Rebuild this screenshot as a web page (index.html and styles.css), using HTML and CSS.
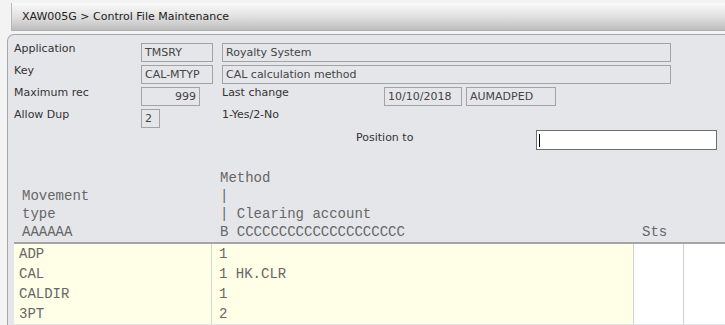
FILE: index.html
```
<html>

<head>
    <meta charset="utf-8">
    <title>XAW005G - Control File Maintenance</title>
    <link rel="stylesheet" href="styles.css">
</head>

<body>
    <div class="titlebar">XAW005G &gt; Control File Maintenance</div>
    <div class="panel">
        <div class="form">
            <div class="row">
                <span class="label">Application</span>
                <span class="box w-code">TMSRY</span>
                <span class="box w-desc">Royalty System</span>
            </div>
            <div class="row">
                <span class="label">Key</span>
                <span class="box w-code">CAL-MTYP</span>
                <span class="box w-desc">CAL calculation method</span>
            </div>
            <div class="row">
                <span class="label">Maximum rec</span>
                <span class="box w-num">999</span>
                <span class="label w-last">Last change</span>
                <span class="box w-date">10/10/2018</span>
                <span class="box w-user">AUMADPED</span>
            </div>
            <div class="row">
                <span class="label">Allow Dup</span>
                <span class="box w-dup">2</span>
                <span class="hint">1-Yes/2-No</span>
            </div>
            <div class="row pos-row">
                <span class="label w-pos">Position to</span>
                <span class="pos-input"><span class="caret"></span></span>
            </div>
        </div>

        <div class="grid head">
            <pre class="col1">

Movement
type
AAAAAA</pre>
            <pre class="col2">Method
|
| Clearing account
B CCCCCCCCCCCCCCCCCCCC</pre>
            <pre class="col3">



Sts</pre>
            <div></div>
        </div>

        <div class="grid rows">
            <div class="cell c1">ADP</div>
            <div class="cell c2">1</div>
            <div class="cell c3"></div>
            <div class="cell c4"></div>

            <div class="cell c1">CAL</div>
            <div class="cell c2">1 HK.CLR</div>
            <div class="cell c3"></div>
            <div class="cell c4"></div>

            <div class="cell c1">CALDIR</div>
            <div class="cell c2">1</div>
            <div class="cell c3"></div>
            <div class="cell c4"></div>

            <div class="cell c1">3PT</div>
            <div class="cell c2">2</div>
            <div class="cell c3"></div>
            <div class="cell c4"></div>
        </div>
    </div>
</body>

</html>
```

FILE: styles.css
```
body {
    margin: 0;
    background-color: #f3f3f3;
    font: 400 11px/22px "DejaVu Sans", Verdana, sans-serif;
    color: #333;
    overflow: hidden;
}

.titlebar {
    margin: 3px 0 0 11px;
    height: 27px;
    line-height: 27px;
    padding-left: 10px;
    color: #222;
    background-image: linear-gradient(#fafafa, #dedede 55%, #bdbdbd);
    border-left: 1px solid #b8b8b8;
    border-bottom: 1px solid #b0b0b0;
}

.panel {
    margin: 3px 0 0 7px;
    height: 300px;
    background-color: #e5e6ea;
    border-top: 1px solid #a8a8a8;
    border-left: 1px solid #a8a8a8;
    border-top-left-radius: 7px;
}

.form {
    padding: 6px 0 0 6px;
}

.row {
    display: flex;
    align-items: center;
    height: 22px;
}

.label {
    width: 127px;
    flex: none;
    position: relative;
    top: -3px;
}

.box {
    flex: none;
    box-sizing: border-box;
    height: 19px;
    line-height: 17px;
    padding: 0 3px;
    border: 1px solid #a3a3a3;
    background-color: #e5e6ea;
    color: #444;
    margin-right: 9px;
}

.w-code {
    width: 72px;
}

.w-desc {
    width: 449px;
}

.w-num {
    width: 59px;
    text-align: right;
    margin-right: 22px;
}

.w-last {
    width: 162px;
}

.w-date {
    width: 78px;
    margin-right: 4px;
}

.w-user {
    width: 90px;
}

.w-dup {
    width: 19px;
    margin-right: 62px;
}

.hint {
    position: relative;
    top: -3px;
}

.pos-row {
    padding-left: 342px;
}

.w-pos {
    width: 180px;
    top: -2px;
}

.pos-input {
    box-sizing: border-box;
    width: 181px;
    height: 20px;
    border: 1px solid #6e6e6e;
    background-color: #fff;
    display: flex;
    align-items: center;
    padding-left: 2px;
}

.caret {
    width: 1px;
    height: 13px;
    background-color: #000;
}

.grid {
    display: grid;
    grid-template-columns: 198px 421px 50px 1fr;
    margin-left: 6px;
}

.head {
    margin-top: 18px;
}

pre {
    margin: 0;
    font: 400 14px/18px "Liberation Mono", "Courier New", monospace;
    color: #666;
}

.head .col1 {
    padding-left: 8px;
}

.head .col2 {
    padding-left: 8px;
}

.head .col3 {
    padding-left: 9px;
}

.rows {
    margin-top: 1px;
    border-top: 2px solid #a5a5a5;
    font: 400 14px/20px "Liberation Mono", "Courier New", monospace;
    color: #666;
}

.cell {
    height: 20px;
    white-space: pre;
}

.c1 {
    background-color: #fffee6;
    padding-left: 5px;
    border-right: 1px solid #d6d6d0;
}

.c2 {
    background-color: #fffee6;
    padding-left: 7px;
}

.c3 {
    background-color: #fff;
    border-left: 1px solid #d0d0d0;
}

.c4 {
    background-color: #fff;
    border-left: 1px solid #d0d0d0;
}
```
